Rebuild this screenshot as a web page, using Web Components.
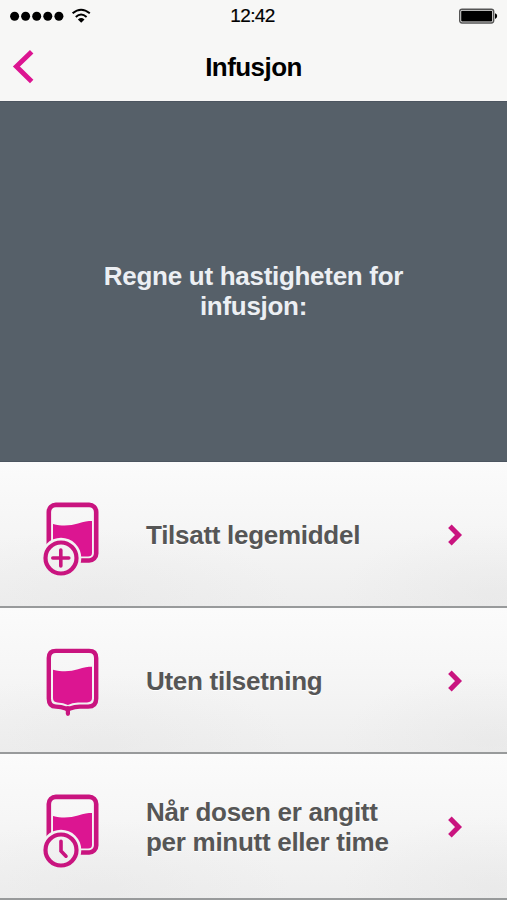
<!DOCTYPE html>
<html lang="no">
<head>
<meta charset="utf-8">
<title>Infusjon</title>
<style>
  body {
    margin: 0;
    font-family: "Liberation Sans", Arial, sans-serif;
  }
</style>
</head>
<body>
<infusion-app></infusion-app>

<script>
const bagIcon = (id, badge) => `
  <svg width="60" height="80" viewBox="42 37 60 80">
    <defs>
      <mask id="cut-${id}" maskUnits="userSpaceOnUse" x="40" y="35" width="64" height="84">
        <rect x="40" y="35" width="64" height="84" fill="white"/>
        <circle cx="61" cy="96" r="20.3" fill="black"/>
      </mask>
    </defs>
    <g mask="url(#cut-${id})">
      <rect x="48.8" y="42.9" width="47.4" height="55.6" rx="7" fill="none" stroke="#c9147f" stroke-width="4.6"/>
      <path d="M53 62 C63 64.5 71 63.5 78 61.5 C84 59.5 88 59 92 59 V91 Q92 94.6 88 94.6 H57 Q53 94.6 53 91 Z" fill="#dc1591"/>
    </g>
    <circle cx="61" cy="96" r="15.5" fill="none" stroke="#c9147f" stroke-width="4.2"/>
    <path d="${badge}" fill="none" stroke="#c9147f" stroke-width="3.6" stroke-linecap="round"/>
  </svg>`;

const icons = {
  plus: bagIcon('plus', 'M60.8 88 V104 M52.8 96 H68.8'),
  clock: bagIcon('clock', 'M61 87.2 V97 L66 102.2'),
  drip: `
    <svg width="60" height="80" viewBox="42 37 60 80">
      <path d="M56 42.9 H89 Q96.2 42.9 96.2 50.1 V90.5 Q96.2 98.6 88.2 98.6 H80 Q74.5 98.6 70 100.5 Q67.9 101.4 67.9 103 Q67.9 101.4 65.8 100.5 Q61.3 98.6 56 98.6 Q48.8 98.6 48.8 90.5 V50.1 Q48.8 42.9 56 42.9 Z" fill="none" stroke="#c9147f" stroke-width="4.4"/>
      <path d="M67.9 100 V105.8" fill="none" stroke="#c9147f" stroke-width="4.2" stroke-linecap="round"/>
      <path d="M53 61.8 C63 64.2 71 63.5 78 61.3 C84 59.4 88 58.8 92 58.8 V90 Q92 94.4 87 94.4 H78 Q72 94.4 67.9 97 Q63.5 94.4 57.5 94.4 Q53 94.4 53 90 Z" fill="#dc1591"/>
    </svg>`
};

class StatusBar extends HTMLElement {
  constructor() {
    super();
    this.root = this.attachShadow({ mode: 'open' });
    this.root.innerHTML = `
      <style>
        :host {
          display: grid;
          grid-template-columns: 1fr auto 1fr;
          align-items: center;
          height: 32px;
          padding: 0 9px 0 10px;
          color: black;
        }
        svg { display: block; }
        .time {
          padding-right: 3px;
          font-size: 19px;
          letter-spacing: -0.6px;
          line-height: 32px;
          -webkit-text-stroke: 0.2px black;
        }
        .battery { justify-self: end; }
      </style>
      <svg width="84" height="32">
        <g>
          <circle cx="4.6" cy="16.2" r="4.5"/>
          <circle cx="15.6" cy="16.2" r="4.5"/>
          <circle cx="26.7" cy="16.2" r="4.5"/>
          <circle cx="37.8" cy="16.2" r="4.5"/>
          <circle cx="48.9" cy="16.2" r="4.5"/>
        </g>
        <g fill="none" stroke="black" stroke-width="2">
          <path d="M62.6 13.3 Q71 6.1 79.8 13.3"/>
          <path d="M65.8 16.9 Q71 12.1 76.6 16.9"/>
        </g>
        <path d="M67.9 19.4 Q71.2 16.6 74.5 19.4 L71.2 22.8 Z"/>
      </svg>
      <span class="time">12:42</span>
      <svg class="battery" width="40" height="32">
        <rect x="1.7" y="9.2" width="34" height="13.8" rx="2.4" fill="#f7f7f6" stroke="#555" stroke-width="1.4"/>
        <rect x="3.2" y="10.7" width="31" height="10.8" rx="1"/>
        <path d="M37 13.3 Q39.2 13.8 39.2 16 Q39.2 18.3 37 18.9 Z"/>
      </svg>
    `;
  }
}

class NavBar extends HTMLElement {
  constructor() {
    super();
    this.root = this.attachShadow({ mode: 'open' });
    this.root.innerHTML = `
      <style>
        :host {
          display: grid;
          grid-template-columns: 60px 1fr 60px;
          align-items: center;
          height: 69px;
        }
        svg { display: block; }
        h1 {
          margin: 0;
          padding-top: 2px;
          font-size: 26px;
          line-height: 67px;
          letter-spacing: -0.55px;
          text-align: center;
          color: black;
        }
      </style>
      <svg width="60" height="69">
        <path d="M31.7 19.7 L16.4 34.6 L31.7 49.5" fill="none" stroke="#dc1591" stroke-width="4.9"/>
      </svg>
      <h1><slot></slot></h1>
    `;
  }
}

class HeroPanel extends HTMLElement {
  constructor() {
    super();
    this.root = this.attachShadow({ mode: 'open' });
    this.root.innerHTML = `
      <style>
        :host {
          display: flex;
          align-items: center;
          justify-content: center;
          box-sizing: border-box;
          height: 361px;
          padding-top: 18px;
          border-top: 1px solid #4c5560;
          border-bottom: 1px solid #4c5560;
          background: #566069;
        }
        p {
          width: 340px;
          margin: 0;
          font-size: 26px;
          font-weight: bold;
          line-height: 30px;
          letter-spacing: -0.29px;
          text-align: center;
          color: #eceff3;
        }
      </style>
      <p><slot></slot></p>
    `;
  }
}

class MenuRow extends HTMLElement {
  constructor() {
    super();
    this.root = this.attachShadow({ mode: 'open' });
  }

  connectedCallback() {
    this.root.innerHTML = `
      <style>
        :host {
          display: grid;
          grid-template-columns: 60px 250px 1fr;
          column-gap: 44px;
          box-sizing: border-box;
          height: 146px;
          padding-left: 42px;
          border-bottom: 2px solid #989a9b;
          background:
            radial-gradient(ellipse 150px 70px at 97% 92%, rgba(222, 222, 222, 0.3), transparent),
            radial-gradient(ellipse 190px 70px at 20% 95%, rgba(225, 225, 225, 0.3), transparent),
            linear-gradient(#fbfbfb, #f6f6f6 45%, #eeeeee);
        }
        svg { display: block; }
        .icon { padding-top: 37px; }
        .label {
          align-self: center;
          padding-top: 1px;
          font-size: 26px;
          font-weight: bold;
          line-height: 30px;
          letter-spacing: -0.28px;
          color: #565656;
          text-shadow: 0 1px 0 white;
        }
        .chevron {
          align-self: center;
          padding-top: 2px;
          padding-left: 8px;
        }
      </style>
      <div class="icon">${icons[this.getAttribute('icon')]}</div>
      <div class="label"><slot></slot></div>
      <div class="chevron">
        <svg width="16" height="22">
          <path d="M1.9 2.3 L10.5 11 L1.9 19.7" fill="none" stroke="#c9147f" stroke-width="5"/>
        </svg>
      </div>
    `;
  }
}

class InfusionApp extends HTMLElement {
  constructor() {
    super();
    this.root = this.attachShadow({ mode: 'open' });
    this.root.innerHTML = `
      <style>
        :host {
          display: block;
          width: 507px;
          height: 900px;
          overflow: hidden;
          background: #f7f7f6;
        }
      </style>
      <status-bar></status-bar>
      <nav-bar>Infusjon</nav-bar>
      <hero-panel>Regne ut hastigheten for<br>infusjon:</hero-panel>
      <menu-row icon="plus">Tilsatt legemiddel</menu-row>
      <menu-row icon="drip">Uten tilsetning</menu-row>
      <menu-row icon="clock">Når dosen er angitt<br>per minutt eller time</menu-row>
    `;
  }
}

customElements.define('status-bar', StatusBar);
customElements.define('nav-bar', NavBar);
customElements.define('hero-panel', HeroPanel);
customElements.define('menu-row', MenuRow);
customElements.define('infusion-app', InfusionApp);
</script>
</body>
</html>
